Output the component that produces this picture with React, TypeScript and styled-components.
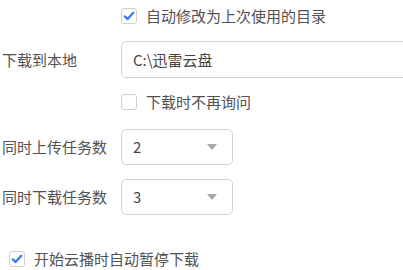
import React from 'react';
import styled, { createGlobalStyle } from 'styled-components';

const Global = createGlobalStyle`
	html, body {
		margin: 0;
		padding: 0;
		background: #fff;
		overflow: hidden;
	}
	body {
		font-family: 'Noto Sans CJK SC', 'Liberation Sans', sans-serif;
		font-size: 15px;
		color: #525252;
	}
`;

const Form = styled.div`
	width: 403px;
	height: 270px;
	padding-top: 8px;
	box-sizing: border-box;
	display: flex;
	flex-direction: column;
	overflow: hidden;
`;

const Row = styled.div<{ $top?: number; $indent?: number }>`
	display: flex;
	align-items: center;
	margin-top: ${(p) => p.$top ?? 0}px;
	padding-left: ${(p) => p.$indent ?? 2}px;
`;

const Label = styled.div`
	width: 119px;
	flex-shrink: 0;
	line-height: 20px;
	white-space: nowrap;
`;

const Check = styled.label`
	display: flex;
	align-items: center;
	gap: 9px;
	line-height: 16px;
	white-space: nowrap;
	cursor: pointer;
`;

const Box = styled.span`
	width: 16px;
	height: 16px;
	box-sizing: border-box;
	border: 1px solid #cfcfcf;
	border-radius: 3px;
	display: flex;
	align-items: center;
	justify-content: center;
	background: #fff;
`;

const Field = styled.div<{ $width: number; $height: number }>`
	width: ${(p) => p.$width}px;
	height: ${(p) => p.$height}px;
	box-sizing: border-box;
	border: 1px solid #d3d3d3;
	border-radius: 5px;
	padding: 0 15px 0 11px;
	display: flex;
	align-items: center;
	justify-content: space-between;
	flex-shrink: 0;
	line-height: 20px;
	color: #444;
`;

const Arrow = styled.span`
	width: 0;
	height: 0;
	border-left: 5px solid transparent;
	border-right: 5px solid transparent;
	border-top: 6px solid #a6a6a6;
`;

const CheckBox = ({ checked, children }: { checked?: boolean; children: React.ReactNode }) => (
	<Check>
		<Box>
			{checked && (
				<svg width="12" height="12" viewBox="0 0 12 12">
					<path d="M1.8 6.4 L4.6 9 L10.2 2.8" fill="none" stroke="#3d7ff2" strokeWidth="2.4" strokeLinecap="round" strokeLinejoin="round" />
				</svg>
			)}
		</Box>
		{children}
	</Check>
);

const App = () => (
	<>
		<Global />
		<Form>
			<Row>
				<Label />
				<CheckBox checked>自动修改为上次使用的目录</CheckBox>
			</Row>
			<Row $top={17}>
				<Label>下载到本地</Label>
				<Field $width={320} $height={37}>C:\迅雷云盘</Field>
			</Row>
			<Row $top={16}>
				<Label />
				<CheckBox>下载时不再询问</CheckBox>
			</Row>
			<Row $top={19}>
				<Label>同时上传任务数</Label>
				<Field $width={112} $height={36}>
					2
					<Arrow />
				</Field>
			</Row>
			<Row $top={14}>
				<Label>同时下载任务数</Label>
				<Field $width={112} $height={36}>
					3
					<Arrow />
				</Field>
			</Row>
			<Row $top={36} $indent={9}>
				<CheckBox checked>开始云播时自动暂停下载</CheckBox>
			</Row>
		</Form>
	</>
);

export default App;
